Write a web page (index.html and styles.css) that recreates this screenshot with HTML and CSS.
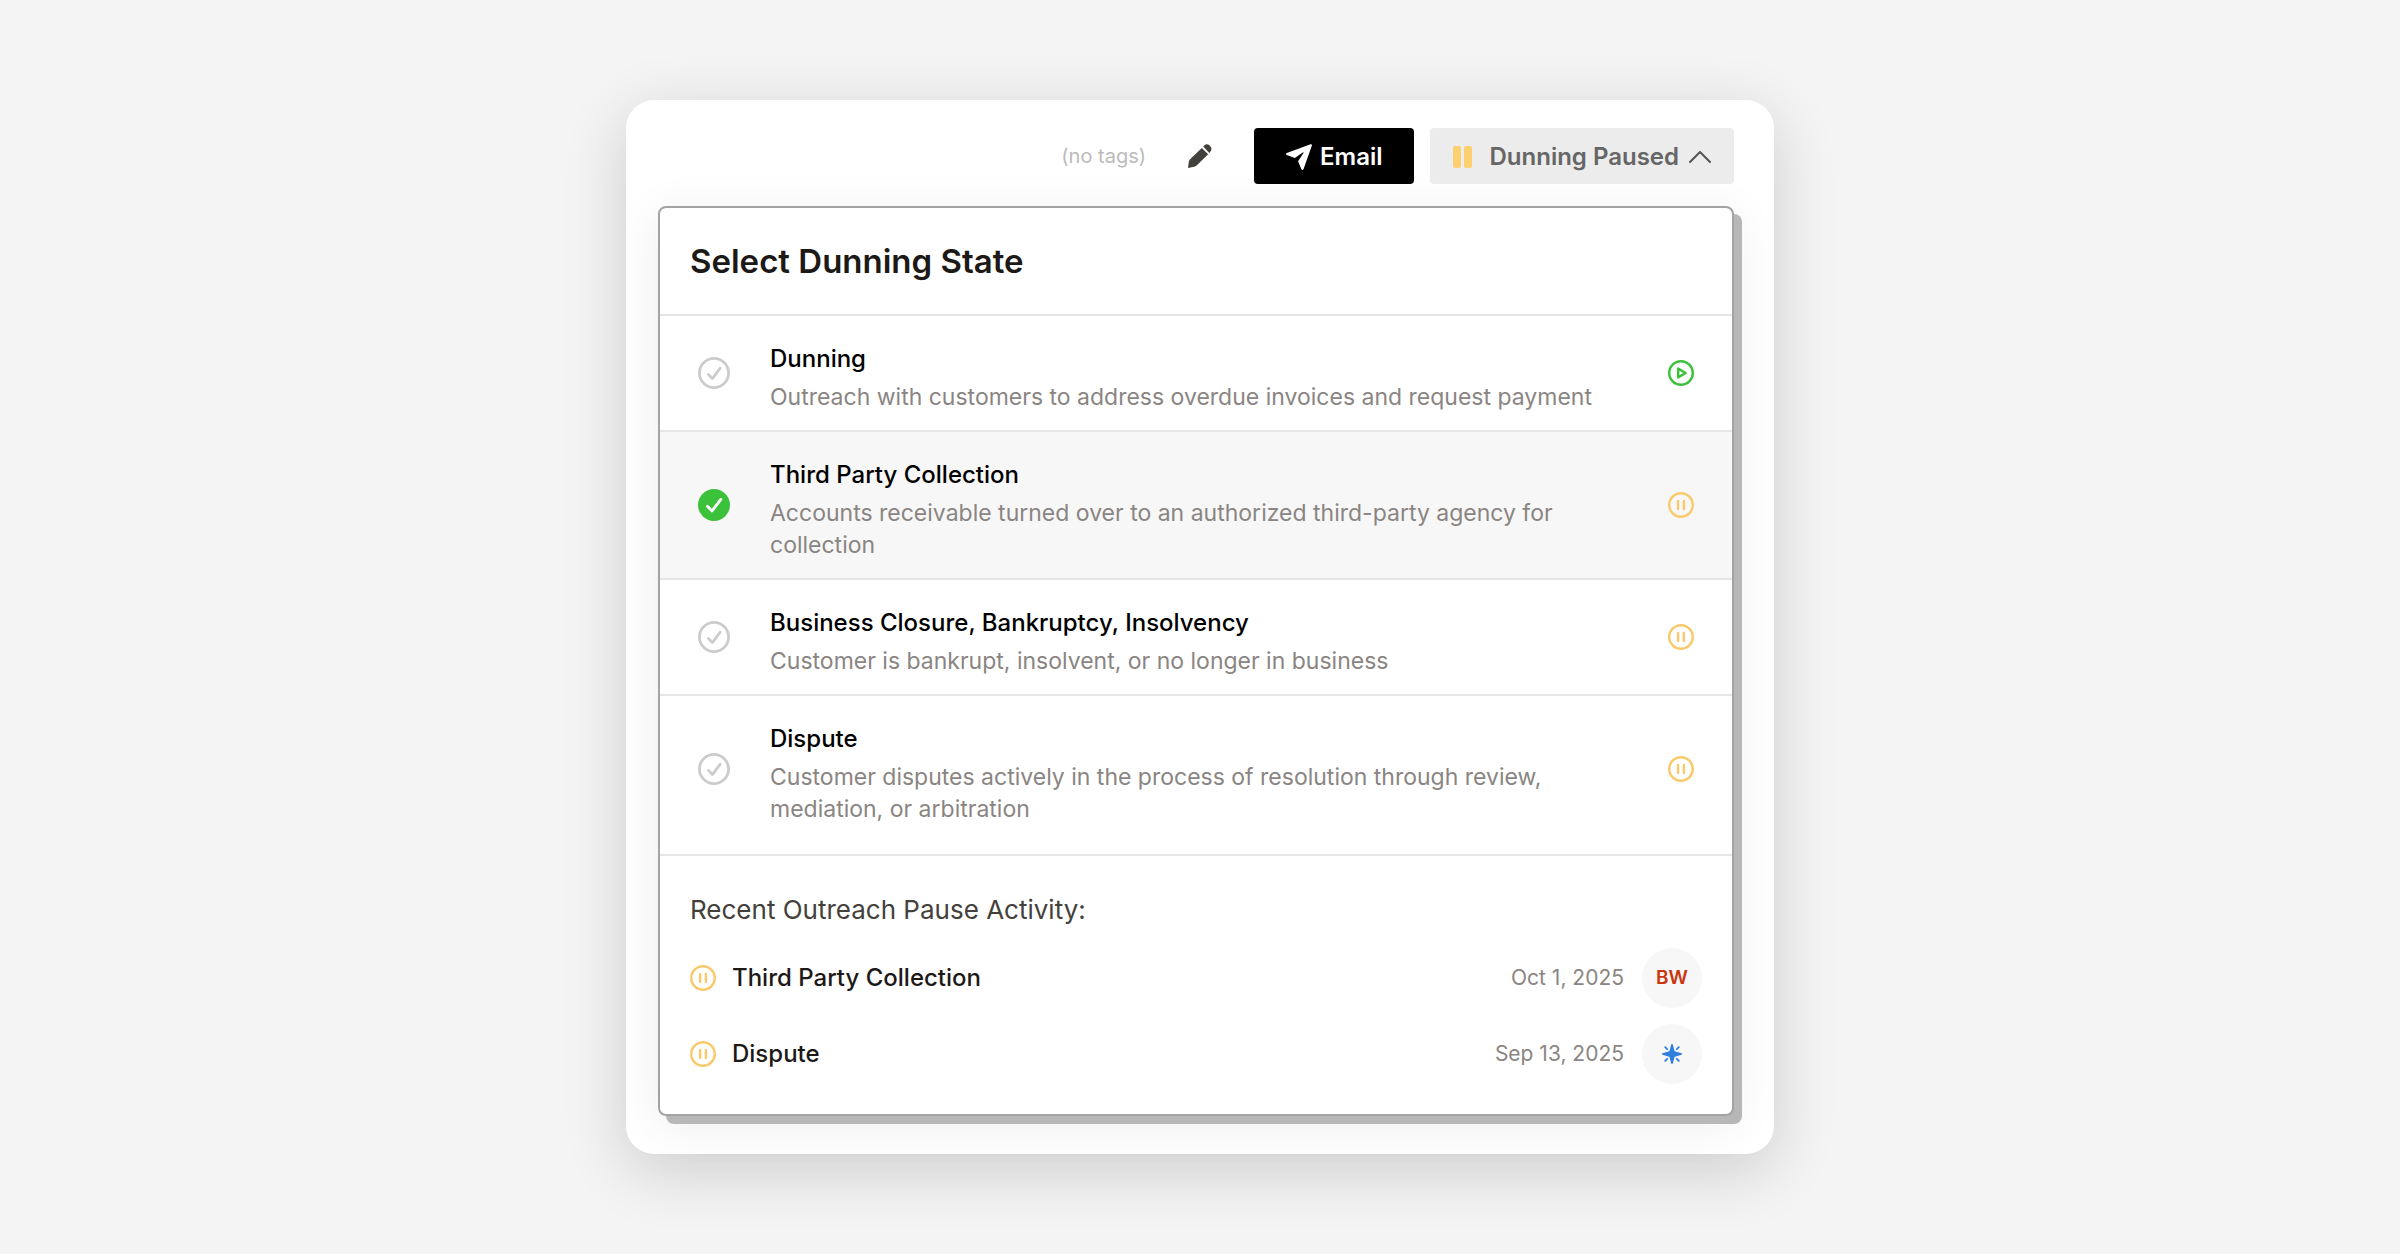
FILE: index.html
```html
<!DOCTYPE html>
<html lang="en">
<head>
	<meta charset="utf-8">
	<meta name="viewport" content="width=device-width, initial-scale=1">
	<title>Dunning State</title>
	<link rel="stylesheet" href="styles.css">
</head>
<body>
	<!-- shared icons -->
	<svg class="sprite" aria-hidden="true">
		<symbol id="check" viewBox="0 0 32 32">
			<circle cx="16" cy="16" r="14.6"/>
			<path d="M10.4 17.4l4 4.2 7.8-10.4"/>
		</symbol>
		<symbol id="check-on" viewBox="0 0 32 32">
			<circle cx="16" cy="16" r="16" fill="#3cc13b" stroke="none"/>
			<path d="M9.4 17.2l4.6 4.8 8.8-11.6" stroke="#fff"/>
		</symbol>
		<symbol id="pause" viewBox="0 0 26 26">
			<circle cx="13" cy="13" r="11.8"/>
			<path d="M10.1 9v8M15.9 9v8"/>
		</symbol>
		<symbol id="play" viewBox="0 0 26 26">
			<circle cx="13" cy="13" r="11.8"/>
			<path d="M10.2 8.6v8.8l7.4-4.4z"/>
		</symbol>
	</svg>

	<main class="card">
		<div class="toolbar">
			<span class="no-tags">(no tags)</span>
			<button type="button" class="btn-edit" aria-label="Edit tags">
				<svg viewBox="0 0 24 24" width="24" height="24">
					<path d="M13.8 3.9l6.4 6.4L8.6 21.6Q7.6 22.5 6.2 22.8L0 24l.8-6.2q.3-1.5 1.3-2.500zM15.2 2.600l1.400-1.400q2.400-2.200 5 .4 3.200 2.800 1 5.600l-1.300 1.700z"/>
				</svg>
			</button>
			<button type="button" class="btn btn-email">
				<svg viewBox="0 0 26 26" width="26" height="26">
					<path d="M24.6.2Q26.2 0 25.9 1.6L17.6 25Q16.6 26.8 15.4 25.2L12.1 17.2 17.6 8.8Q17.6 8 16.8 8.4L8.8 14 .8 11Q-.8 10 .8 9z"/>
				</svg>
				Email
			</button>
			<button type="button" class="btn btn-state" aria-expanded="true">
				<svg viewBox="0 0 20 22" width="20" height="22">
					<rect x="0" y="0" width="8" height="22" rx="2"/>
					<rect x="11" y="0" width="8" height="22" rx="2"/>
				</svg>
				Dunning Paused
				<svg class="chevron" viewBox="0 0 22 12" width="22" height="12">
					<path d="M1 11L11 1l10 10"/>
				</svg>
			</button>
		</div>

		<section class="panel">
			<h1 class="panel-title">Select Dunning State</h1>

			<form class="states">
				<label class="state">
					<span class="state-check">
						<input type="radio" name="state">
						<svg class="off"><use href="#check"/></svg>
						<svg class="on"><use href="#check-on"/></svg>
					</span>
					<span class="state-text">
						<span class="state-name">Dunning</span>
						<span class="state-desc">Outreach with customers to address overdue invoices and request payment</span>
					</span>
					<svg class="icon play"><use href="#play"/></svg>
				</label>
				<label class="state selected">
					<span class="state-check">
						<input type="radio" name="state" checked>
						<svg class="off"><use href="#check"/></svg>
						<svg class="on"><use href="#check-on"/></svg>
					</span>
					<span class="state-text">
						<span class="state-name">Third Party Collection</span>
						<span class="state-desc">Accounts receivable turned over to an authorized third-party agency for collection</span>
					</span>
					<svg class="icon pause"><use href="#pause"/></svg>
				</label>
				<label class="state">
					<span class="state-check">
						<input type="radio" name="state">
						<svg class="off"><use href="#check"/></svg>
						<svg class="on"><use href="#check-on"/></svg>
					</span>
					<span class="state-text">
						<span class="state-name">Business Closure, Bankruptcy, Insolvency</span>
						<span class="state-desc">Customer is bankrupt, insolvent, or no longer in business</span>
					</span>
					<svg class="icon pause"><use href="#pause"/></svg>
				</label>
				<label class="state">
					<span class="state-check">
						<input type="radio" name="state">
						<svg class="off"><use href="#check"/></svg>
						<svg class="on"><use href="#check-on"/></svg>
					</span>
					<span class="state-text">
						<span class="state-name">Dispute</span>
						<span class="state-desc">Customer disputes actively in the process of resolution through review, mediation, or arbitration</span>
					</span>
					<svg class="icon pause"><use href="#pause"/></svg>
				</label>
			</form>

			<div class="activity">
				<h2 class="activity-title">Recent Outreach Pause Activity:</h2>
				<ul class="activity-list">
					<li class="activity-item">
						<svg class="icon pause"><use href="#pause"/></svg>
						<span class="activity-name">Third Party Collection</span>
						<time class="activity-date" datetime="2025-10-01">Oct 1, 2025</time>
						<span class="avatar">BW</span>
					</li>
					<li class="activity-item">
						<svg class="icon pause"><use href="#pause"/></svg>
						<span class="activity-name">Dispute</span>
						<time class="activity-date" datetime="2025-09-13">Sep 13, 2025</time>
						<span class="avatar">
							<svg viewBox="0 0 20 20" width="20" height="20">
								<path class="star" d="M10 0Q10.8 0 11 1.2L12.4 6.4Q12.6 7.300 13.500 7.600L18.800 9Q20 9.200 20 10T18.800 11L13.500 12.400Q12.600 12.700 12.400 13.600L11 18.800Q10.800 20 10 20T9 18.800L7.600 13.600Q7.400 12.700 6.500 12.400L1.200 11Q0 10.800 0 10T1.200 9L6.500 7.600Q7.400 7.300 7.600 6.400L9 1.200Q9.200 0 10 0z"/>
								<path class="rays" d="M3.200 3.200l2 2M16.800 3.200l-2 2M3.200 16.800l2-2M16.800 16.800l-2-2"/>
							</svg>
						</span>
					</li>
				</ul>
			</div>
		</section>
	</main>
</body>
</html>
```

FILE: styles.css
```css
* {
	box-sizing: border-box;
}
body {
	margin: 0;
	min-height: 100vh;
	display: flex;
	align-items: center;
	justify-content: center;
	background: #f4f4f4;
	color: #1c1917;
	font-family: Inter, "Liberation Sans", sans-serif;
	font-size: 24px;
	line-height: 32px;
}
button {
	font: inherit;
	border: 0;
	cursor: pointer;
}
svg {
	flex: none;
}
.sprite {
	position: absolute;
	width: 0;
	height: 0;
}

.card {
	width: 100%;
	max-width: 1148px;
	padding: 28px 40px 38px 32px;
	border-radius: 28px;
	background: #fff;
	box-shadow: 0 16px 64px rgba(0, 0, 0, .16);
}

/* toolbar */
.toolbar {
	display: flex;
	align-items: center;
	justify-content: flex-end;
	margin-bottom: 22px;
}
.no-tags {
	color: #bbb;
	font-size: 20px;
}
.btn-edit {
	display: flex;
	margin: 0 32px;
	padding: 10px;
	background: none;
	fill: #44403c;
}
.btn {
	display: flex;
	align-items: center;
	height: 56px;
	border-radius: 4px;
	font-weight: 600;
}
.btn-email {
	gap: 8px;
	padding: 2px 32px 0;
	background: #000;
	color: #fff;
	fill: #fff;
}
.btn-state {
	gap: 16px;
	margin-left: 16px;
	padding: 2px 23px 0;
	background: #ececec;
	color: #666;
	fill: #fcd070;
}
.chevron {
	margin-left: -6px;
	fill: none;
	stroke: #555;
	stroke-width: 2;
	stroke-linecap: round;
	stroke-linejoin: round;
}

/* dropdown panel */
.panel {
	border: 2px solid #a3a3a3;
	border-radius: 8px;
	background: #fff;
	box-shadow: 8px 8px 0 #b7b7b7, 0 8px 48px rgba(0, 0, 0, .08);
}
.panel-title {
	margin: 0;
	padding: 33px 30px;
	font-size: 33px;
	line-height: 40px;
	font-weight: 600;
}
.states {
	padding-bottom: 12px;
	border-bottom: 2px solid #e5e5e5;
}
.state {
	display: flex;
	align-items: center;
	padding: 17px 38px;
	border-top: 2px solid #e5e5e5;
	cursor: pointer;
}
.selected {
	background: #f7f7f7;
}
.state-check {
	position: relative;
	width: 32px;
	height: 32px;
	margin-right: 40px;
}
/* the real radio lies invisible over the drawn check */
.state-check input {
	position: absolute;
	inset: 0;
	width: 32px;
	height: 32px;
	margin: 0;
	opacity: 0;
}
.state-check svg {
	display: block;
	width: 32px;
	height: 32px;
	fill: none;
	stroke: #ccc;
	stroke-width: 2.8;
	stroke-linecap: round;
	stroke-linejoin: round;
}
.state-check .on,
.state-check input:checked ~ .off {
	display: none;
}
.state-check input:checked ~ .on {
	display: block;
}
.state-text {
	flex: 1;
	display: flex;
	flex-direction: column;
	gap: 6px;
	margin-right: 48px;
	padding-top: 10px;
}
.state-name {
	color: #000;
	font-weight: 500;
}
.state-desc {
	color: #8a8582;
	font-size: 23px;
}
.icon {
	width: 26px;
	height: 26px;
	fill: none;
	stroke-width: 2.4;
	stroke-linecap: round;
	stroke-linejoin: round;
}
.play {
	stroke: #3cc13b;
}
.pause {
	stroke: #fac96c;
}

/* recent activity */
.activity {
	padding: 38px 30px 30px;
}
.activity-title {
	margin: 0 0 22px;
	color: #44403c;
	font-size: 26px;
	font-weight: 400;
}
.activity-list {
	display: flex;
	flex-direction: column;
	gap: 16px;
	margin: 0;
	padding: 0;
	list-style: none;
}
.activity-item {
	display: flex;
	align-items: center;
}
.activity-name {
	flex: 1;
	margin-left: 16px;
	font-weight: 500;
}
.activity-date {
	margin-right: 18px;
	color: #8a8582;
	font-size: 21px;
}
.avatar {
	display: flex;
	align-items: center;
	justify-content: center;
	width: 60px;
	height: 60px;
	border-radius: 50%;
	background: #f7f7f7;
	color: #c9360c;
	font-size: 19px;
	font-weight: 600;
}
.star {
	fill: #2f80de;
}
.rays {
	stroke: #2f80de;
	stroke-width: 1.8;
	stroke-linecap: round;
}
```
